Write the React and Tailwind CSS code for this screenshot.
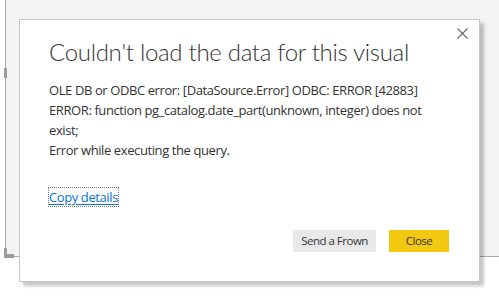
import React from "react";

/* ── Error dialog over the report canvas ── */

function CloseIcon() {
  return (
    <svg width="11" height="11" viewBox="0 0 11 11" fill="none">
      <path d="M0.5 0.5L10.5 10.5M10.5 0.5L0.5 10.5" stroke="#666" strokeWidth="1.1" />
    </svg>
  );
}

export default function App() {
  return (
    <div className="relative w-[499px] h-[307px] overflow-hidden bg-white font-['Open_Sans',sans-serif] text-[#333]">
      {/* Canvas behind the dialog */}
      <div className="ml-[5px] h-[257px] border-l border-b border-[#a8a8a8] bg-[#f3f3f3]" />

      {/* Canvas resize handles */}
      <div className="absolute left-[4px] top-[68px] w-[3px] h-[10px] bg-[#9a9a9a]" />
      <div className="absolute left-[4px] top-[248px] w-[3px] h-[10px] bg-[#9a9a9a]" />
      <div className="absolute left-[4px] top-[254px] w-[10px] h-[4px] bg-[#9a9a9a]" />

      {/* Dialog */}
      <div className="absolute left-[19px] top-[19px] w-[461px] h-[263px] bg-white border border-[#c6c6c6] shadow-[4px_4px_3px_rgba(0,0,0,0.22)]">
        <button className="absolute right-[11px] top-[8px] p-0">
          <CloseIcon />
        </button>

        <div className="flex flex-col h-full pl-[29px] pr-[30px] pt-[14px] pb-[29px]">
          <h1 className="font-['Lato',sans-serif] text-[24px] leading-[36px] font-light tracking-[-0.3px] whitespace-nowrap">
            Couldn't load the data for this visual
          </h1>

          <div className="mt-[10px] text-[13px] leading-[20px] tracking-[-0.4px] whitespace-nowrap">
            <div>OLE DB or ODBC error: [DataSource.Error] ODBC: ERROR [42883]</div>
            <div>ERROR: function pg_catalog.date_part(unknown, integer) does not</div>
            <div>exist;</div>
            <div>Error while executing the query.</div>
          </div>

          <div className="mt-[24px]">
            <a className="-ml-px inline-block border border-dotted border-[#777] text-[13px] leading-[18px] tracking-[-0.4px] text-[#0a74d6] underline underline-offset-2 cursor-pointer">
              Copy details
            </a>
          </div>

          <div className="mt-auto flex justify-end gap-[13px]">
            <button className="w-[83px] h-[22px] bg-[#e9e9e9] text-[11.5px] leading-[22px] tracking-[-0.5px] whitespace-nowrap text-[#333]">
              Send a Frown
            </button>
            <button className="w-[60px] h-[22px] bg-[#f2c811] text-[11.5px] leading-[22px] tracking-[-0.5px] text-[#333]">
              Close
            </button>
          </div>
        </div>
      </div>
    </div>
  );
}
